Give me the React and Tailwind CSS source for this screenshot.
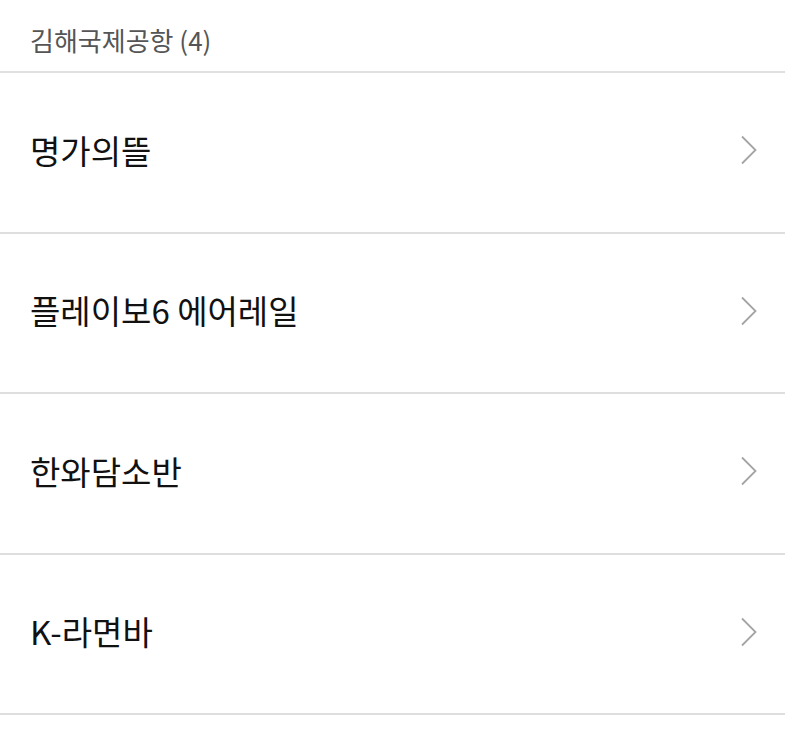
import React from 'react'

const stores = ['명가의뜰', '플레이보6 에어레일', '한와담소반', 'K-라면바']

function Chevron() {
  return (
    <svg width="18" height="30" viewBox="0 0 18 30" fill="none">
      <path d="M2 1.5 L15.5 15 L2 28.5" stroke="#a4a4a4" strokeWidth="1.8" />
    </svg>
  )
}

export default function App() {
  return (
    <div
      className="min-h-[750px] bg-white"
      style={{ fontFamily: '"Noto Sans CJK KR", "Noto Sans", sans-serif' }}
    >
      <div className="flex h-[73px] items-center border-b-2 border-[#e0e0e0] pl-[30px] pt-[7px] text-[26px] text-[#555]">
        김해국제공항 (4)
      </div>
      {stores.map((name) => (
        <div
          key={name}
          className="flex h-[160.5px] items-center justify-between border-b-2 border-[#dedede] pb-[4px] pl-[30px] pr-[27px]"
        >
          <span className="text-[33px] text-[#111]">{name}</span>
          <Chevron />
        </div>
      ))}
    </div>
  )
}
